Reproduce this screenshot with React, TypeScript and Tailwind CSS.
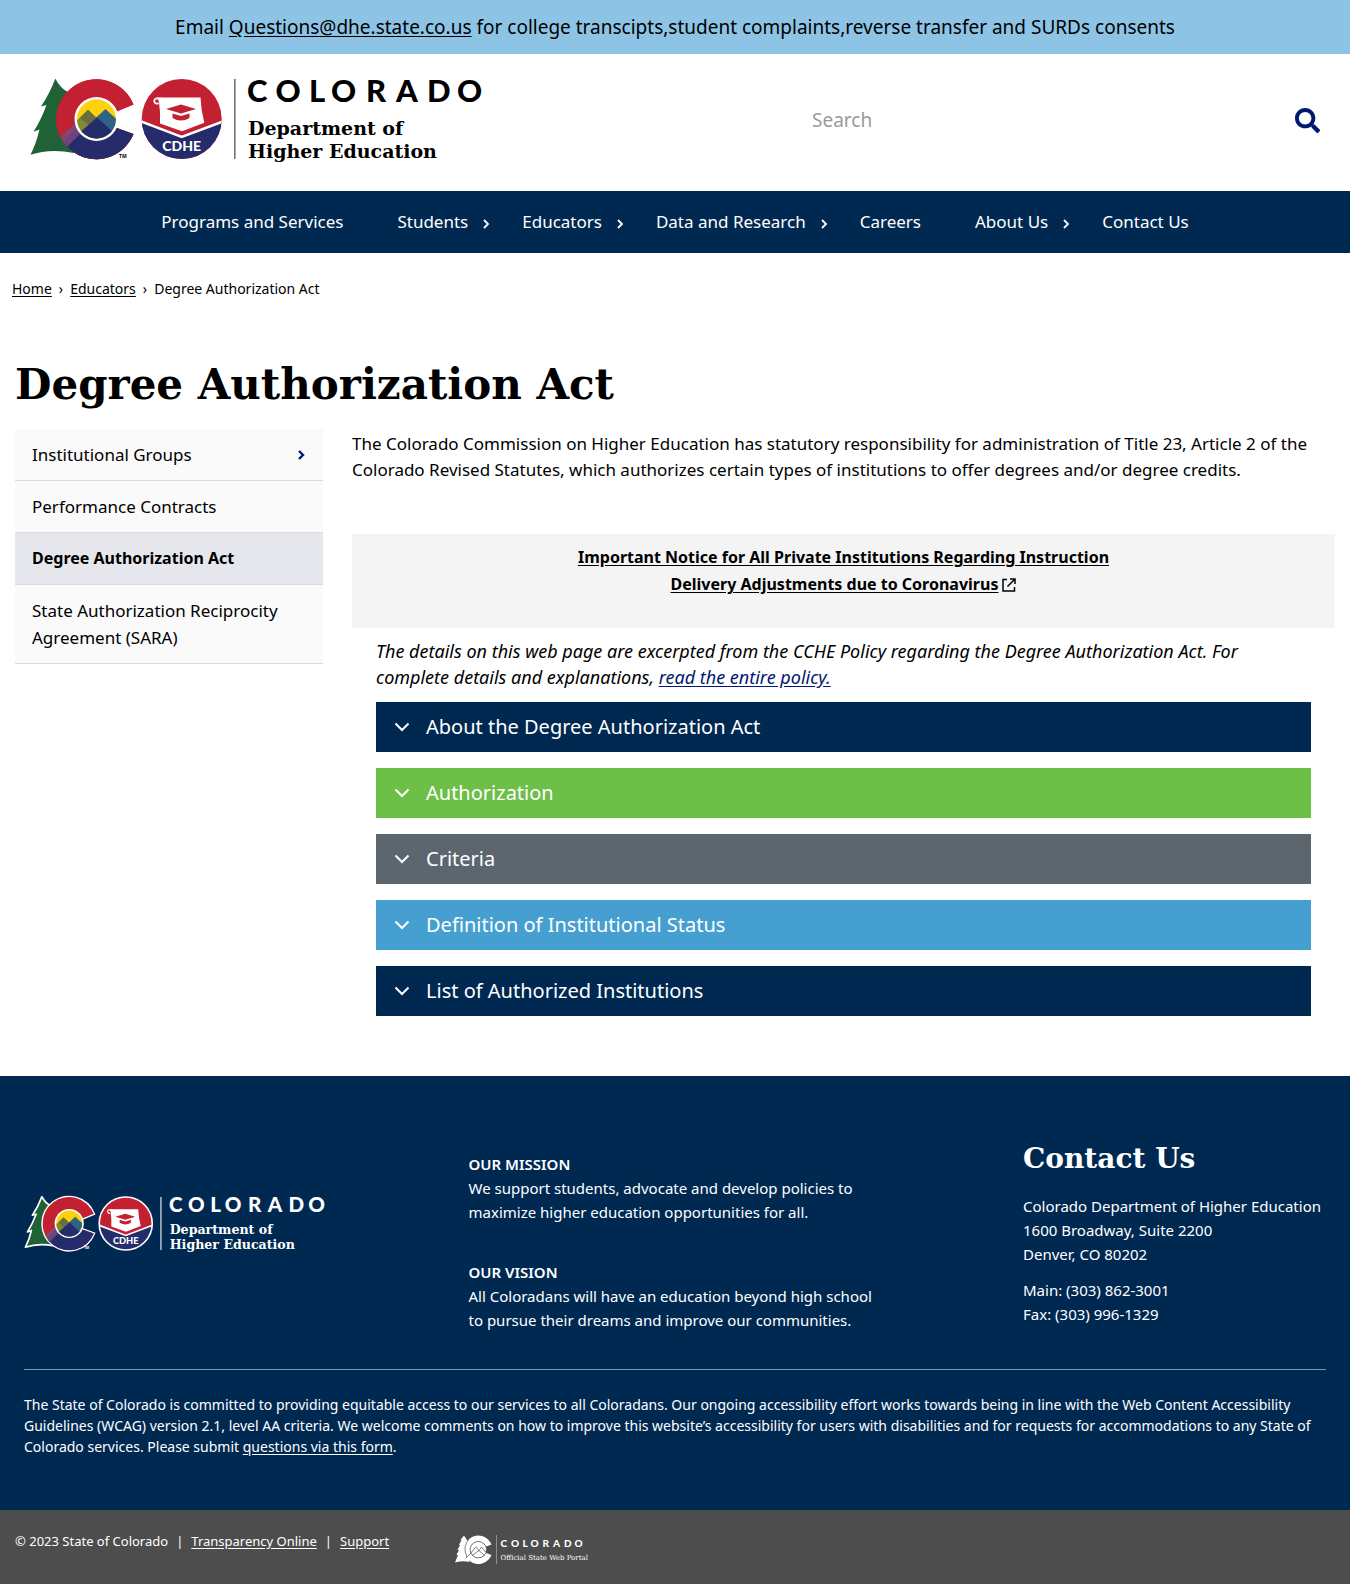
import React, { useState } from "react";
import { FaSearch } from "react-icons/fa";

const sans = "font-['Noto_Sans','Open_Sans',sans-serif]";
const slab = "font-['DejaVu_Serif',serif]";

function StateLogo({ light = false, className = "" }: { light?: boolean; className?: string }) {
  const ink = light ? "#ffffff" : "#000000";
  const outline = light ? "#ffffff" : "none";
  const tree =
    "M55.3 78.5 Q50 93 41 106.5 L46.5 105 Q41 120 33.5 131.8 L39.5 129.5 Q36 144 30.5 154.8 Q50 148 74 153 L96 119 L68 92 Q60 88 55.3 78.5 Z";
  const letterC =
    "M133.5 104.5 A40 40 0 1 0 133.5 134 L115.5 127.5 A20.5 20.5 0 1 1 115.5 112 Z";
  return (
    <svg viewBox="29 67 460 98" className={className} role="img" aria-label="Colorado Department of Higher Education">
      <defs>
        <clipPath id={light ? "sunLight" : "sun"}>
          <circle cx="96.5" cy="119" r="19.5" />
        </clipPath>
        <clipPath id={light ? "cLight" : "c"}>
          <path d={letterC} />
        </clipPath>
        <clipPath id={light ? "sealLight" : "seal"}>
          <circle cx="181.7" cy="119" r="40" />
        </clipPath>
      </defs>

      <path d={tree} fill="#1f6236" stroke={outline} strokeWidth="2.5" strokeLinejoin="round" />
      <path d={letterC} fill="#c32032" stroke={outline} strokeWidth="4" />
      <g clipPath={light ? "url(#cLight)" : "url(#c)"}>
        <rect x="50" y="70" width="90" height="95" fill="#c32032" />
        <path d="M58 154 L80 132 L96 111 L140 125 V165 H58 Z" fill="#242c6c" />
        <path d="M56 141 L76 122 L80 132 L64 148 Z" fill="#87456f" />
        <path d="M61 143.5 L79 126 L82 132 L66 148 Z" fill="#6a4380" />
      </g>
      <circle cx="96.5" cy="119" r="22" fill="#ffffff" />
      <g clipPath={light ? "url(#sunLight)" : "url(#sun)"}>
        <rect x="74" y="96" width="46" height="46" fill="#fdd20a" />
        <path d="M70 127 L88 109.5 L106 127 V145 H70 Z" fill="#7f8a35" />
        <path d="M89 124 L105.5 109 L124 126 V145 H89 Z" fill="#2f6384" />
        <path d="M88 110 L97 118.5 L90 126 L80 118 Z" fill="#696e3e" />
        <path d="M70 141 L97 117.5 L123 141 V145 H70 Z" fill="#242c6c" />
      </g>

      <g clipPath={light ? "url(#sealLight)" : "url(#seal)"}>
        <rect x="140" y="78" width="84" height="84" fill="#c32032" />
        <path d="M141 121 L181.7 137 L223 121 V160 H141 Z" fill="#242c6c" />
        <path d="M141 121.5 L181.7 137 L223 121.5" fill="none" stroke="#ffffff" strokeWidth="2.5" />
      </g>
      {light && <circle cx="181.7" cy="119" r="40" fill="none" stroke="#ffffff" strokeWidth="2.5" />}
      <path d="M157 97.5 H200.5 Q201 110 204.3 122.7 L182 131.3 L160 123.5 Q160.5 112 159 102 Z" fill="#ffffff" />
      <path d="M158.5 103 A2.6 2.6 0 1 1 158 98.6 H162" fill="none" stroke="#ffffff" strokeWidth="1.7" />
      <path d="M166 109 L181 104.5 L196 109 L181 113.5 Z" fill="#c32032" />
      <path d="M172.5 113.5 L181 116 L189.5 113.5 V118 Q181 123 172.5 118 Z" fill="#c32032" />
      <text x="181.7" y="150.500" textAnchor="middle" fontFamily="Lato" fontWeight="900" fontSize="14" fill="#ffffff">CDHE</text>
      <text x="119" y="157.5" fontFamily="Open Sans" fontWeight="700" fontSize="5" fill={ink}>TM</text>

      <rect x="234" y="79" width="1.6" height="80" fill={light ? "#ffffff" : "#707276"} />
      <text x="247 275.5 309 331 366 396 427 457" y="102" fontFamily="Lato" fontWeight="900" fontSize="31" fill={ink}>COLORADO</text>
      <text x="248" y="134.500" fontFamily="DejaVu Serif" fontWeight="700" fontSize="19" fill={ink}>Department of</text>
      <text x="248" y="158" fontFamily="DejaVu Serif" fontWeight="700" fontSize="19" fill={ink}>Higher Education</text>
    </svg>
  );
}

function PortalLogo() {
  return (
    <svg viewBox="0 0 138 30" className="h-[30px] w-[138px]" role="img" aria-label="Colorado Official State Web Portal">
      <path d="M9 0.5 L5.5 5 L6.5 5 L4 10 L5 10 L2.5 15 L4 15 L1.5 20 L3 20 L0 27.5 Q8 25.5 14 27 L20 14 L12 5 Z" fill="#ffffff" />
      <path d="M36.5 9.5 A14.2 14.2 0 1 0 36.5 20 L30 17.5 A7.3 7.3 0 1 1 30 12 Z" fill="#ffffff" />
      <circle cx="23.3" cy="14.7" r="8.2" fill="#ffffff" stroke="#4d4d4d" strokeWidth="0.8" />
      <path d="M16 18 L20.5 12 L24 15.5 L26.5 12 L30.5 17 M17 20.5 L24 15.5 L29.5 20.5 M11 23 L16 18 M14 4 Q7 12 12 22" fill="none" stroke="#4d4d4d" strokeWidth="0.7" />
      <rect x="41" y="0" width="0.8" height="29" fill="#a0a0a0" />
      <text x="45.500 56 67.500 75.500 87.500 98 109 119.500" y="12" fontFamily="Lato" fontWeight="900" fontSize="10" fill="#ffffff">COLORADO</text>
      <text x="45.500" y="24.500" fontFamily="DejaVu Serif" fontSize="7" fill="#ffffff">Official State Web Portal</text>
    </svg>
  );
}

function Chevron({ className }: { className: string }) {
  return (
    <svg viewBox="0 0 8 12" className={className} fill="none" stroke="currentColor" aria-hidden="true">
      <path d="M2 2 L6 6 L2 10" />
    </svg>
  );
}

const navItems = [
  { label: "Programs and Services" },
  { label: "Students", menu: true },
  { label: "Educators", menu: true },
  { label: "Data and Research", menu: true },
  { label: "Careers" },
  { label: "About Us", menu: true },
  { label: "Contact Us" },
];

const sideItems = [
  { label: "Institutional Groups", menu: true },
  { label: "Performance Contracts" },
  { label: "Degree Authorization Act", active: true },
  { label: "State Authorization Reciprocity Agreement (SARA)" },
];

const sections = [
  { label: "About the Degree Authorization Act", color: "bg-[#002952]" },
  { label: "Authorization", color: "bg-[#6dbf48]" },
  { label: "Criteria", color: "bg-[#5c666f]" },
  { label: "Definition of Institutional Status", color: "bg-[#459fd0]" },
  { label: "List of Authorized Institutions", color: "bg-[#002952]" },
];

export default function App() {
  const [query, setQuery] = useState("");
  return (
    <div className={`${sans} bg-white text-black`}>
      <div className="bg-[#8dc4e5] px-4 py-3 text-center text-[19px] leading-[30px]">
        Email{" "}
        <a href="mailto:Questions@dhe.state.co.us" className="underline underline-offset-2">Questions@dhe.state.co.us</a>{" "}
        for college transcipts,student complaints,reverse transfer and SURDs consents
      </div>

      <header className="flex items-start justify-between pt-[13px] pr-[30px] pb-[26px] pl-[29px]">
        <a href="#home"><StateLogo className="h-[98px] w-[460px]" /></a>
        <form className="flex w-[508px] items-center pt-[33px]" onSubmit={(e) => e.preventDefault()}>
          <input
            type="text"
            aria-label="Search"
            placeholder="Search"
            value={query}
            onChange={(e) => setQuery(e.target.value)}
            className="h-10 min-w-0 flex-1 bg-transparent text-[19px] outline-none placeholder:text-[#9a9a9a]"
          />
          <button type="submit" aria-label="Submit search" className="text-[#001970]">
            <FaSearch className="size-[25px]" />
          </button>
        </form>
      </header>

      <nav aria-label="Main" className="bg-[#002952] text-white">
        <ul className="flex h-[62px] items-center justify-center text-[17px]">
          {navItems.map((item, i) => (
            <li key={item.label} className="flex items-center">
              <a href="#nav">{item.label}</a>
              {i < navItems.length - 1 && (
                <span className="flex w-[54px] pl-[14px]">
                  {item.menu && <Chevron className="mt-[3px] h-3 w-2 stroke-[1.8]" />}
                </span>
              )}
            </li>
          ))}
        </ul>
      </nav>

      <nav aria-label="Breadcrumb" className="px-3 pt-[26px]">
        <ol className="flex gap-[7px] text-[14px] leading-5">
          <li><a href="#home" className="underline underline-offset-2">Home</a></li>
          <li aria-hidden="true">›</li>
          <li><a href="#educators" className="underline underline-offset-2">Educators</a></li>
          <li aria-hidden="true">›</li>
          <li>Degree Authorization Act</li>
        </ol>
      </nav>

      <main className="px-[15px] pt-[60px] pb-[60px]">
        <h1 className={`${slab} text-[42px] leading-[52px] font-bold`}>Degree Authorization Act</h1>

        <div className="flex items-start gap-[29px] pt-[18px]">
          <aside className="w-[308px] shrink-0 text-[17px] leading-[27px]">
            <ul>
              {sideItems.map((item) => (
                <li key={item.label} className={`border-b border-[#d9dadd] ${item.active ? "bg-[#e5e7ec] text-[16px] font-bold" : "bg-[#fafafa]"}`}>
                  <a href="#section" className="flex items-center justify-between py-3 pr-[18px] pl-[17px]">
                    <span>{item.label}</span>
                    {item.menu && <Chevron className="h-3 w-2 stroke-[2.4] text-[#001970]" />}
                  </a>
                </li>
              ))}
            </ul>
          </aside>

          <div className="min-w-0 flex-1 pt-0.5 text-[17px] leading-[26px]">
            <p>
              The Colorado Commission on Higher Education has statutory responsibility for administration of Title 23, Article 2 of the
              Colorado Revised Statutes, which authorizes certain types of institutions to offer degrees and/or degree credits.
            </p>

            <div className="mt-[51px] bg-[#f4f4f4] pt-[10px] pb-[30px] text-center text-[16px] leading-[27px] font-bold">
              <a href="#notice" className="underline underline-offset-2">
                Important Notice for All Private Institutions Regarding Instruction
                <br />
                Delivery Adjustments due to Coronavirus
              </a>
              <svg viewBox="0 0 14 14" className="ml-1 inline-block size-[14px] align-[-2px]" fill="none" stroke="currentColor" strokeWidth="1.5" aria-hidden="true">
                <path d="M5 1.500 H1 V13 H12.500 V9 M8 1 H13 V6 M13 1 L5.500 8.500" />
              </svg>
            </div>

            <div className="px-6 pt-[10px]">
              <p className="text-[18px] italic">
                The details on this web page are excerpted from the CCHE Policy regarding the Degree Authorization Act. For
                complete details and explanations, <a href="#policy" className="text-[#001970] underline underline-offset-2">read the entire policy.</a>
              </p>
              <div className="flex flex-col gap-4 pt-3">
                {sections.map((s) => (
                  <button key={s.label} type="button" aria-expanded="false" className={`flex h-[50px] items-center gap-4 pl-[18px] text-left text-[20px] text-white ${s.color}`}>
                    <svg viewBox="0 0 16 10" className="h-[10px] w-4" fill="none" stroke="currentColor" strokeWidth="2" aria-hidden="true">
                      <path d="M1.500 1.500 L8 8 L14.500 1.500" />
                    </svg>
                    {s.label}
                  </button>
                ))}
              </div>
            </div>
          </div>
        </div>
      </main>

      <footer className="text-white">
        <div className="bg-[#002952] px-6 pt-[65px] pb-[53px]">
          <div className="flex h-[229px] justify-between border-b border-[#7f94a9]">
            <StateLogo light className="mt-[48px] h-[65px] w-[306px]" />
            <div className="w-[416px] pt-[11px] text-[15px] leading-6">
              <h2 className="font-semibold">OUR MISSION</h2>
              <p>We support students, advocate and develop policies to maximize higher education opportunities for all.</p>
              <h2 className="pt-9 font-semibold">OUR VISION</h2>
              <p>All Coloradans will have an education beyond high school to pursue their dreams and improve our communities.</p>
            </div>
            <div className="w-[303px] text-[15px] leading-6">
              <h2 className={`${slab} text-[28px] leading-9 font-bold`}>Contact Us</h2>
              <p className="pt-[17px] whitespace-nowrap">
                Colorado Department of Higher Education<br />
                1600 Broadway, Suite 2200<br />
                Denver, CO 80202
              </p>
              <p className="pt-3">
                Main: (303) 862-3001<br />
                Fax: (303) 996-1329
              </p>
            </div>
          </div>
          <p className="pt-6 text-[14px] leading-[21px]">
            The State of Colorado is committed to providing equitable access to our services to all Coloradans. Our ongoing accessibility effort works towards being in line with the Web Content Accessibility Guidelines (WCAG) version 2.1, level AA criteria. We welcome comments on how to improve this website’s accessibility for users with disabilities and for requests for accommodations to any State of Colorado services. Please submit{" "}
            <a href="#form" className="underline underline-offset-2">questions via this form</a>.
          </p>
        </div>
        <div className="flex items-start bg-[#4d4d4d] px-[15px] pt-[21px] pb-[19px] text-[13px] leading-5">
          <p className="flex w-[440px] gap-2">
            <span>© 2023 State of Colorado</span>
            <span>|</span>
            <a href="#transparency" className="underline underline-offset-2">Transparency Online</a>
            <span>|</span>
            <a href="#support" className="underline underline-offset-2">Support</a>
          </p>
          <div className="pt-1"><PortalLogo /></div>
        </div>
      </footer>
    </div>
  );
}
